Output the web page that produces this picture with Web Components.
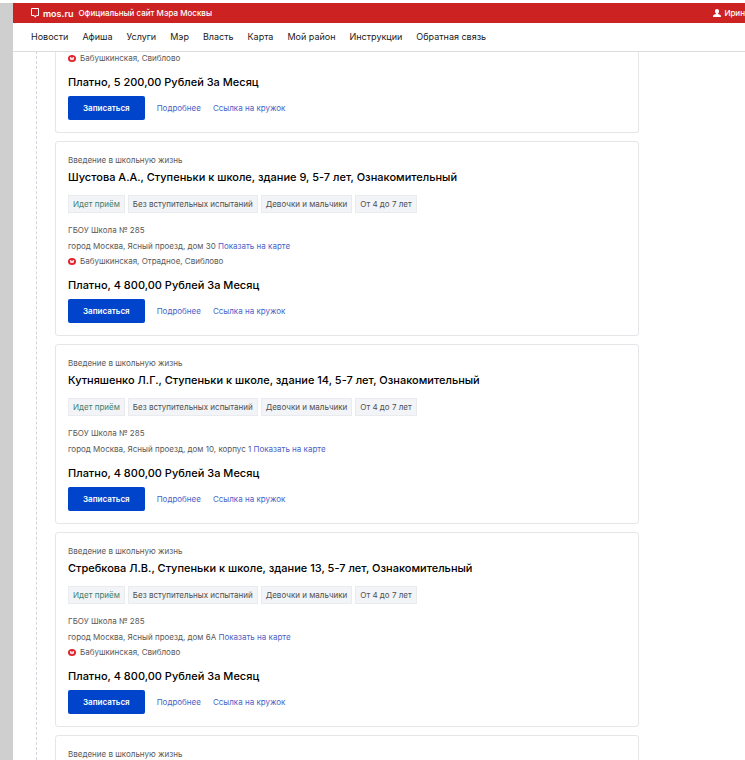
<!DOCTYPE html>
<html lang="ru">
<head>
<meta charset="UTF-8">
<meta name="viewport" content="width=device-width, initial-scale=1.0">
<title>mos.ru</title>
<style>
    body {
        margin: 0;
        background-color: #fff;
        font-family: Inter, 'Liberation Sans', sans-serif;
    }
</style>
</head>
<body>
<club-page>
    <site-header slot="header"></site-header>
    <club-list></club-list>
</club-page>

<script>
const navItems = ['Новости', 'Афиша', 'Услуги', 'Мэр', 'Власть', 'Карта', 'Мой район', 'Инструкции', 'Обратная связь'];

const tags = ['Идет приём', 'Без вступительных испытаний', 'Девочки и мальчики', 'От 4 до 7 лет'];

const clubs = [
    { metro: 'Бабушкинская, Свиблово', price: '5 200,00' },
    {
        title: 'Шустова А.А., Ступеньки к школе, здание 9, 5-7 лет, Ознакомительный',
        address: 'город Москва, Ясный проезд, дом 30',
        metro: 'Бабушкинская, Отрадное, Свиблово',
        price: '4 800,00'
    },
    {
        title: 'Кутняшенко Л.Г., Ступеньки к школе, здание 14, 5-7 лет, Ознакомительный',
        address: 'город Москва, Ясный проезд, дом 10, корпус 1',
        price: '4 800,00'
    },
    {
        title: 'Стребкова Л.В., Ступеньки к школе, здание 13, 5-7 лет, Ознакомительный',
        address: 'город Москва, Ясный проезд, дом 6А',
        metro: 'Бабушкинская, Свиблово',
        price: '4 800,00'
    },
    { short: true }
];

class ClubPage extends HTMLElement {
    constructor() {
        super();
        this.attachShadow({ mode: 'open' });
    }

    connectedCallback() {
        this.shadowRoot.innerHTML = `
        <style>
            :host {
                display: flex;
                flex-direction: column;
                box-sizing: border-box;
                height: 100vh;
                padding-top: 3px;
                overflow: hidden;
            }

            .body {
                display: flex;
                flex: 1;
                min-height: 0;
            }

            .edge {
                flex: none;
                width: 13px;
                background-color: #cfcfcf;
            }

            .content {
                flex: 1;
                min-width: 0;
                display: flex;
                flex-direction: column;
            }

            main {
                flex: 1;
                min-height: 0;
                overflow: hidden;
                margin-left: 23px;
                padding: 0 16px 0 18px;
                border-left: 1px dashed #d3d3dc;
            }
        </style>
        <div class="body">
            <div class="edge"></div>
            <div class="content">
                <slot name="header"></slot>
                <main><slot></slot></main>
            </div>
        </div>
        `;
    }
}
customElements.define('club-page', ClubPage);

class SiteHeader extends HTMLElement {
    constructor() {
        super();
        this.attachShadow({ mode: 'open' });
    }

    connectedCallback() {
        const links = navItems.map(item => `<a href="#">${item}</a>`).join('');

        this.shadowRoot.innerHTML = `
        <style>
            :host {
                display: block;
                position: relative;
                z-index: 1;
                background-color: #fff;
                box-shadow: 0 1px 0 #dcdcdc;
            }

            .bar {
                display: flex;
                align-items: center;
                height: 20px;
                padding-left: 18px;
                background-color: #cc2222;
                color: #fff;
                font-size: 8px;
                font-weight: 500;
                white-space: nowrap;
            }

            a {
                color: inherit;
                text-decoration: none;
            }

            svg {
                display: block;
                flex: none;
            }

            .logo {
                display: flex;
                align-items: center;
                gap: 3px;
                margin-right: 5px;
                font-size: 9px;
                font-weight: 600;
            }

            .user {
                display: flex;
                align-items: center;
                gap: 3px;
                margin-left: auto;
            }

            nav {
                display: flex;
                align-items: center;
                gap: 14px;
                box-sizing: border-box;
                height: 28px;
                padding: 0 0 2px 18px;
                color: #1a1a1a;
                font-size: 9px;
                white-space: nowrap;
            }
        </style>
        <div class="bar">
            <a class="logo" href="#">
                <svg width="9" height="10" viewBox="0 0 9 10" fill="none" stroke="#fff">
                    <path d="M3 7.500H.5v-7h7v7H5.500"/>
                    <path d="M2.500 7.500h3.500L4.200 9.700z" fill="#fff" stroke="none"/>
                </svg>
                mos.ru
            </a>
            <span>Официальный сайт Мэра Москвы</span>
            <a class="user" href="#">
                <svg width="8" height="8" viewBox="0 0 8 8" fill="#fff">
                    <path d="M4 0C5.300 0 6 .9 6 2.200 6 3.300 5.500 4.100 5 4.500v.6l2 .7c.6.2.9.6.9 1.200v1H.1V7c0-.6.3-1 .9-1.200l2-.7v-.6C2.500 4.100 2 3.300 2 2.200 2 .9 2.700 0 4 0z"/>
                </svg>
                Ирин
            </a>
        </div>
        <nav>${links}</nav>
        `;
    }
}
customElements.define('site-header', SiteHeader);

class ClubCard extends HTMLElement {
    constructor() {
        super();
        this.attachShadow({ mode: 'open' });
    }

    connectedCallback() {
        const club = clubs[this.getAttribute('index')];

        const style = `
        <style>
            :host {
                display: block;
                box-sizing: border-box;
                padding: 11px 12px 12px;
                border: 1px solid #e6e6ea;
                border-radius: 3px;
                color: #595959;
                font-size: 8px;
            }

            :host([continued]) {
                padding-top: 0;
                border-top: 0;
                border-radius: 0 0 3px 3px;
            }

            p, h2, ul {
                margin: 0;
                padding: 0;
            }

            a {
                color: #4a5fc8;
                text-decoration: none;
            }

            .caption {
                line-height: 14px;
            }

            h2, .price {
                color: #000;
                font-size: 11px;
                font-weight: 500;
                line-height: 20px;
            }

            .tags {
                display: flex;
                flex-wrap: wrap;
                gap: 3px;
                margin: 8px 0 9px;
                list-style: none;
            }

            .tags li {
                padding: 0 4px;
                border: 1px solid #e9ebef;
                background-color: #f2f4f7;
                color: #505050;
                line-height: 16px;
            }

            .tags li:first-child {
                color: #43806c;
            }

            .line {
                line-height: 16px;
            }

            .metro {
                display: flex;
                align-items: center;
                gap: 4px;
                line-height: 15px;
            }

            .price {
                margin: 6px 0 4px;
            }

            .actions {
                display: flex;
                align-items: center;
                gap: 12px;
            }

            button {
                height: 24px;
                padding: 0 15px;
                border: none;
                border-radius: 2px;
                background-color: #0044cc;
                color: #fff;
                font: inherit;
                font-weight: 600;
                cursor: pointer;
            }
        </style>
        `;

        const caption = club.title || club.short ? `<p class="caption">Введение в школьную жизнь</p>` : '';

        const info = club.title ? `
        <h2>${club.title}</h2>
        <ul class="tags">${tags.map(tag => `<li>${tag}</li>`).join('')}</ul>
        <p class="line">ГБОУ Школа № 285</p>
        <p class="line">${club.address} <a href="#">Показать на карте</a></p>
        ` : '';

        const metro = club.metro ? `
        <p class="metro">
            <svg width="8" height="7" viewBox="0 0 8 7">
                <ellipse cx="4" cy="3.500" rx="4" ry="3.500" fill="#e0232b"/>
                <path d="M2 2h1l1 1.200L5 2h1v2.500L4 5.200 2 4.500z" fill="#fff" fill-opacity=".85"/>
            </svg>
            ${club.metro}
        </p>
        ` : '';

        const footer = club.price ? `
        <p class="price">Платно, ${club.price} Рублей За Месяц</p>
        <div class="actions">
            <button type="button">Записаться</button>
            <a href="#">Подробнее</a>
            <a href="#">Ссылка на кружок</a>
        </div>
        ` : '';

        this.shadowRoot.innerHTML = style + caption + info + metro + footer;
    }
}
customElements.define('club-card', ClubCard);

class ClubList extends HTMLElement {
    constructor() {
        super();
        this.attachShadow({ mode: 'open' });
    }

    connectedCallback() {
        const cards = clubs.map((club, index) =>
            `<club-card index="${index}" ${index === 0 ? 'continued' : ''}></club-card>`
        ).join('');

        this.shadowRoot.innerHTML = `
        <style>
            :host {
                display: flex;
                flex-direction: column;
                gap: 8px;
                max-width: 584px;
            }
        </style>
        ${cards}
        `;
    }
}
customElements.define('club-list', ClubList);
</script>
</body>
</html>
